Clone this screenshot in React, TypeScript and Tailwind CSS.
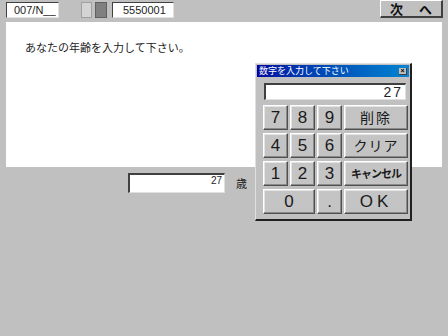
import React from "react";

const jp = { fontFamily: '"Noto Sans CJK JP", "DejaVu Sans", sans-serif' };
const sans = { fontFamily: '"Liberation Sans", Arial, sans-serif' };

function Key({ label, className, jpFont }: { label: string; className: string; jpFont?: boolean }) {
  return (
    <div
      className={`flex items-center justify-center bg-[#c4c4c4] border-t border-l border-t-white border-l-white border-b border-r border-b-[#505050] border-r-[#505050] shadow-[inset_-1px_-1px_0_#8a8a8a,inset_1px_1px_0_#e4e4e4] text-[#1a1a1a] ${className}`}
      style={jpFont ? jp : sans}
    >
      {label}
    </div>
  );
}

export default function App() {
  return (
    <div className="relative w-[448px] h-[336px] bg-[#c0c0c0] overflow-hidden">
      {/* top bar */}
      <div className="flex h-[22px] items-start">
        <div
          className="ml-[6px] mt-[2px] w-[53px] h-[16px] bg-white border-t border-l border-t-[#404040] border-l-[#404040] border-b border-r border-b-[#e0e0e0] border-r-[#e0e0e0] text-[11px] leading-[14px] pl-[7px] text-[#222]"
          style={sans}
        >
          007/N__
        </div>
        <div className="ml-[22px] mt-[2px] w-[11px] h-[16px] bg-[#d4d4d4] border border-[#a0a0a0]" />
        <div className="ml-[3px] mt-[2px] w-[12px] h-[16px] bg-[#808080] border border-[#606060]" />
        <div
          className="ml-[5px] mt-[2px] w-[62px] h-[16px] bg-white border-t border-l border-t-[#404040] border-l-[#404040] border-b border-r border-b-[#e0e0e0] border-r-[#e0e0e0] text-[11px] leading-[14px] pl-[10px] text-[#222]"
          style={sans}
        >
          5550001
        </div>
        <div
          className="ml-auto mr-[5px] mt-0 w-[63px] h-[18px] flex items-center justify-center gap-[16px] bg-[#c0c0c0] border-t border-l border-t-white border-l-white border-b-2 border-r-2 border-b-[#404040] border-r-[#404040] text-[13px] font-semibold text-[#111]"
          style={jp}
        >
          <span>次</span>
          <span>へ</span>
        </div>
      </div>

      {/* main white panel */}
      <div className="ml-[6px] w-[436px] h-[145px] bg-white pt-[18px] pl-[19px]">
        <div className="text-[11px] leading-[14px] text-[#222]" style={jp}>
          あなたの年齢を入力して下さい。
        </div>
      </div>

      {/* age row */}
      <div className="flex items-center mt-[6px] ml-[128px]">
        <div
          className="w-[97px] h-[20px] bg-white border-t-2 border-l-2 border-t-[#404040] border-l-[#404040] border-b border-r border-b-[#e0e0e0] border-r-[#e0e0e0] text-right pr-[2px] text-[10px] leading-[12px] text-[#222]"
          style={sans}
        >
          27
        </div>
        <div className="ml-[11px] text-[11px] text-[#222]" style={jp}>
          歳
        </div>
      </div>

      {/* numeric dialog */}
      <div className="absolute left-[255px] top-[63px] w-[157px] h-[158px] bg-[#c0c0c0] border-t border-l border-t-[#e0e0e0] border-l-[#e0e0e0] border-b-2 border-r-2 border-b-[#202020] border-r-[#202020] p-[1px]">
        <div className="flex items-center h-[12px] bg-gradient-to-r from-[#0000a0] to-[#1084d0] px-[2px]">
          <span className="text-[9px] leading-[12px] text-white" style={jp}>
            数字を入力して下さい
          </span>
          <div className="ml-auto w-[8px] h-[7px] bg-[#c0c0c0] border-b border-r border-[#404040] flex items-center justify-center text-[7px] leading-[7px] font-bold text-black" style={sans}>
            ×
          </div>
        </div>
        <div className="mt-[6px] ml-[7px] w-[142px] h-[17px] bg-white border-t-2 border-l-2 border-t-[#404040] border-l-[#404040] border-b border-r border-b-[#e0e0e0] border-r-[#e0e0e0] text-right pr-[2px] text-[14px] leading-[14px] tracking-[2px] text-[#222]" style={sans}>
          27
        </div>
        <div className="mt-[5px] ml-[6px] grid grid-cols-[25px_25px_25px_64px] gap-x-[2px] gap-y-[3px] auto-rows-[25px]">
          <Key label="7" className="text-[17px]" />
          <Key label="8" className="text-[17px]" />
          <Key label="9" className="text-[17px]" />
          <Key label="削除" className="text-[14px] tracking-[2px]" jpFont />
          <Key label="4" className="text-[17px]" />
          <Key label="5" className="text-[17px]" />
          <Key label="6" className="text-[17px]" />
          <Key label="クリア" className="text-[14px] tracking-[1px]" jpFont />
          <Key label="1" className="text-[17px]" />
          <Key label="2" className="text-[17px]" />
          <Key label="3" className="text-[17px]" />
          <Key label="キャンセル" className="text-[11px] font-bold tracking-[-1px]" jpFont />
          <Key label="0" className="col-span-2 text-[17px]" />
          <Key label="." className="text-[17px]" />
          <Key label="OK" className="text-[17px] tracking-[4px]" />
        </div>
      </div>
    </div>
  );
}
